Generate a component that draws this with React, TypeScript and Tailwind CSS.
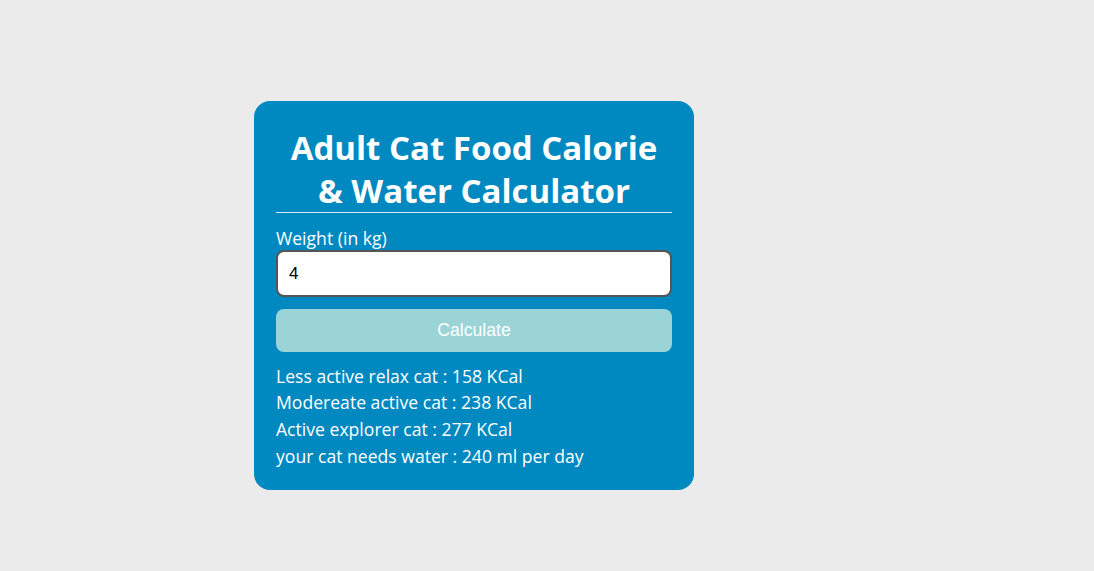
import React from "react";

export default function App() {
  return (
    <div className="min-h-[571px] w-full bg-[#ebebeb] pt-[101px] pl-[254px]">
      <div className="w-[440px] rounded-[16px] bg-[#0089c0] px-[22px] pt-[25px] pb-[20.7px] font-['Open_Sans',sans-serif] text-white">
        <h1 className="border-b border-[#d9e9f0] text-center text-[33px] font-bold leading-[43px]">
          Adult Cat Food Calorie
          <br />& Water Calculator
        </h1>
        <label className="mt-[14px] block text-[17.6px] leading-[23px]">Weight (in kg)</label>
        <input
          type="text"
          defaultValue="4"
          className="box-border block h-[47px] w-full rounded-[8px] border-2 border-[#555555] bg-white px-[11px] font-['Liberation_Sans',Arial,sans-serif] text-[17px] text-black outline-none"
        />
        <button className="mt-[12px] block h-[43px] w-full rounded-[8px] bg-[#9ad4d7] font-['Liberation_Sans',Arial,sans-serif] text-[17.6px] text-white">
          Calculate
        </button>
        <div className="mt-[10.7px] text-[17.6px] leading-[26.67px]">
          <div>Less active relax cat : 158 KCal</div>
          <div>Modereate active cat : 238 KCal</div>
          <div>Active explorer cat : 277 KCal</div>
          <div>your cat needs water : 240 ml per day</div>
        </div>
      </div>
    </div>
  );
}
